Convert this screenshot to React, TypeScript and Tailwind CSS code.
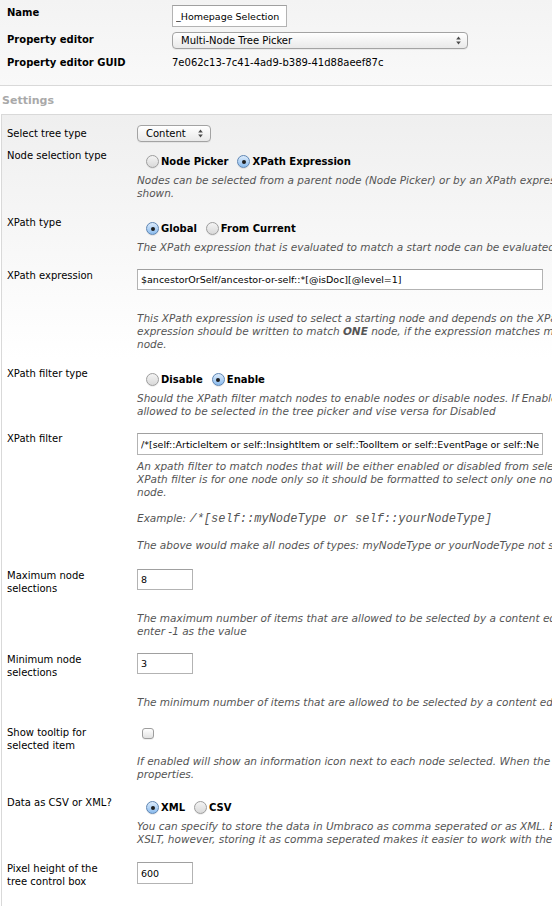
import React from 'react'

const Arrows = () => (
  <svg width="5" height="9" viewBox="0 0 5 9" className="shrink-0">
    <path d="M2.5 0.5 L4.8 3.4 L0.2 3.4 Z" fill="#4a4a4a" />
    <path d="M2.5 8.5 L4.8 5.6 L0.2 5.6 Z" fill="#4a4a4a" />
  </svg>
)

const Radio = ({ checked }: { checked?: boolean }) =>
  checked ? (
    <span className="w-[13px] h-[13px] shrink-0 rounded-full border border-[#5f86b3] bg-linear-to-b from-[#dcebfb] to-[#8bbcee] flex items-center justify-center shadow-[0_1px_0_rgba(0,0,0,0.08)]">
      <span className="w-[4px] h-[4px] rounded-full bg-[#1e1e1e]" />
    </span>
  ) : (
    <span className="w-[13px] h-[13px] shrink-0 rounded-full border border-[#9d9d9d] bg-linear-to-b from-[#f4f4f4] to-[#d9d9d9] shadow-[0_1px_0_rgba(0,0,0,0.06)]" />
  )

const RadioGroup = ({ options }: { options: { label: string; checked?: boolean }[] }) => (
  <div className="flex items-center gap-[9px] pl-[9px] h-[13px]">
    {options.map((o) => (
      <div key={o.label} className="flex items-center gap-[2px]">
        <Radio checked={o.checked} />
        <span className="font-bold whitespace-nowrap">{o.label}</span>
      </div>
    ))}
  </div>
)

const TextInput = ({ value, className }: { value: string; className: string }) => (
  <input
    readOnly
    value={value}
    className={`block bg-white border border-[#b3b3b3] border-t-[#a0a0a0] px-[3px] text-[9.5px] text-black font-['DejaVu_Sans',sans-serif] outline-none ${className}`}
  />
)

const Desc = ({ children, className = '' }: { children: React.ReactNode; className?: string }) => (
  <div className={`italic text-[10.5px] text-[#555] whitespace-nowrap ${className}`}>{children}</div>
)

const Row = ({
  label,
  className,
  labelClass = '',
  children,
}: {
  label: React.ReactNode
  className: string
  labelClass?: string
  children: React.ReactNode
}) => (
  <div className={`flex ${className}`}>
    <div className={`w-[135px] shrink-0 pl-[5px] whitespace-nowrap ${labelClass}`}>{label}</div>
    <div className="flex-1 min-w-0">{children}</div>
  </div>
)

export default function App() {
  return (
    <div className="w-[552px] h-[906px] overflow-hidden bg-white font-['DejaVu_Sans',sans-serif] text-[10px] leading-[13px] text-black">
      {/* General panel */}
      <div className="h-[86px] border-b border-[#d9d9d9] bg-linear-to-b from-[#f3f3f3] to-[#f9f9f9] pt-[5px]">
        <div className="flex">
          <div className="w-[172px] shrink-0 pl-[7px] pt-[1px] font-bold">Name</div>
          <TextInput value="_Homepage Selection" className="w-[115px] h-[22px]" />
        </div>
        <div className="flex mt-[5px]">
          <div className="w-[172px] shrink-0 pl-[7px] pt-[1px] font-bold">Property editor</div>
          <div className="w-[296px] h-[17px] rounded-[4px] border border-[#a3a3a3] bg-linear-to-b from-white to-[#e9e9e9] flex items-center justify-between pl-[8px] pr-[6px] shadow-[0_1px_0_rgba(0,0,0,0.05)]">
            <span>Multi-Node Tree Picker</span>
            <Arrows />
          </div>
        </div>
        <div className="flex mt-[7px]">
          <div className="w-[172px] shrink-0 pl-[7px] font-bold">Property editor GUID</div>
          <div>7e062c13-7c41-4ad9-b389-41d88aeef87c</div>
        </div>
      </div>

      <div className="h-[28px] pl-[2px] pt-[8px] text-[11px] leading-[14px] font-bold text-[#a9a9a9]">Settings</div>

      {/* Settings panel */}
      <div className="ml-[1px] border-t border-l border-[#d9d9d9] bg-linear-to-b from-[#efefef] to-white to-30% pb-[40px]">
        <Row label="Select tree type" className="mt-[10px]" labelClass="pt-[2px]">
          <div className="w-[74px] h-[17px] rounded-[4px] border border-[#a3a3a3] bg-linear-to-b from-white to-[#e9e9e9] flex items-center justify-between pl-[8px] pr-[7px] shadow-[0_1px_0_rgba(0,0,0,0.05)]">
            <span>Content</span>
            <Arrows />
          </div>
        </Row>

        <Row label="Node selection type" className="mt-[7px]">
          <div className="mt-[6px]">
            <RadioGroup options={[{ label: 'Node Picker' }, { label: 'XPath Expression', checked: true }]} />
          </div>
          <Desc className="mt-[6px]">
            <div>Nodes can be selected from a parent node (Node Picker) or by an XPath expression (XPath Expression). When using XPath, only matching nodes are</div>
            <div>shown.</div>
          </Desc>
        </Row>

        <Row label="XPath type" className="mt-[16px]">
          <div className="mt-[6px]">
            <RadioGroup options={[{ label: 'Global', checked: true }, { label: 'From Current' }]} />
          </div>
          <Desc className="mt-[6px]">
            <div>The XPath expression that is evaluated to match a start node can be evaluated at a global tree level, or matched from the current node being edited.</div>
          </Desc>
        </Row>

        <Row label="XPath expression" className="mt-[15px]">
          <TextInput value="$ancestorOrSelf/ancestor-or-self::*[@isDoc][@level=1]" className="w-[406px] h-[21px]" />
          <Desc className="mt-[22px]">
            <div>This XPath expression is used to select a starting node and depends on the XPath Type (Global or From Current). The</div>
            <div>
              expression should be written to match <span className="font-bold">ONE</span> node, if the expression matches more than one node, the first node will be used as the start
            </div>
            <div>node.</div>
          </Desc>
        </Row>

        <Row label="XPath filter type" className="mt-[16px]">
          <div className="mt-[6px]">
            <RadioGroup options={[{ label: 'Disable' }, { label: 'Enable', checked: true }]} />
          </div>
          <Desc className="mt-[6px]">
            <div>Should the XPath filter match nodes to enable nodes or disable nodes. If Enable is selected, only nodes that match the filter will be</div>
            <div>allowed to be selected in the tree picker and vise versa for Disabled</div>
          </Desc>
        </Row>

        <Row label="XPath filter" className="mt-[14px]">
          <TextInput
            value="/*[self::ArticleItem or self::InsightItem or self::ToolItem or self::EventPage or self::NewsItem]"
            className="w-[406px] h-[22px] mt-[1px]"
          />
          <Desc className="mt-[5px]">
            <div>An xpath filter to match nodes that will be either enabled or disabled from selection based on the XPath filter type. The</div>
            <div>XPath filter is for one node only so it should be formatted to select only one node. The XPath expression is evaluated against a single</div>
            <div>node.</div>
            <div className="mt-[13px]">
              Example: <span className="font-['Liberation_Mono',monospace] text-[12px]">/*[self::myNodeType or self::yourNodeType]</span>
            </div>
            <div className="mt-[13px]">The above would make all nodes of types: myNodeType or yourNodeType not selectable in the tree picker</div>
          </Desc>
        </Row>

        <Row
          label={
            <>
              <div>Maximum node</div>
              <div>selections</div>
            </>
          }
          className="mt-[17px]"
        >
          <TextInput value="8" className="w-[56px] h-[21px]" />
          <Desc className="mt-[22px]">
            <div>The maximum number of items that are allowed to be selected by a content editor. If an unlimited number of selections is required,</div>
            <div>enter -1 as the value</div>
          </Desc>
        </Row>

        <Row
          label={
            <>
              <div>Minimum node</div>
              <div>selections</div>
            </>
          }
          className="mt-[15px]"
        >
          <TextInput value="3" className="w-[56px] h-[21px]" />
          <Desc className="mt-[22px]">
            <div>The minimum number of items that are allowed to be selected by a content editor.</div>
          </Desc>
        </Row>

        <Row
          label={
            <>
              <div>Show tooltip for</div>
              <div>selected item</div>
            </>
          }
          className="mt-[17px]"
        >
          <div className="mt-[2px] ml-[5px] w-[12px] h-[11px] rounded-[3px] border border-[#9d9d9d] bg-linear-to-b from-white to-[#e2e2e2] shadow-[0_1px_0_rgba(0,0,0,0.06)]" />
          <Desc className="mt-[16px]">
            <div>If enabled will show an information icon next to each node selected. When the icon is clicked, a tooltip shows the node's</div>
            <div>properties.</div>
          </Desc>
        </Row>

        <Row label="Data as CSV or XML?" className="mt-[15px]">
          <div className="mt-[5px]">
            <RadioGroup options={[{ label: 'XML', checked: true }, { label: 'CSV' }]} />
          </div>
          <Desc className="mt-[6px]">
            <div>You can specify to store the data in Umbraco as comma seperated or as XML. By default it is stored as XML which is easier to use in</div>
            <div>XSLT, however, storing it as comma seperated makes it easier to work with the data using the API such as Node factory.</div>
          </Desc>
        </Row>

        <Row
          label={
            <>
              <div>Pixel height of the</div>
              <div>tree control box</div>
            </>
          }
          className="mt-[16px]"
        >
          <TextInput value="600" className="w-[56px] h-[22px]" />
        </Row>
      </div>
    </div>
  )
}
